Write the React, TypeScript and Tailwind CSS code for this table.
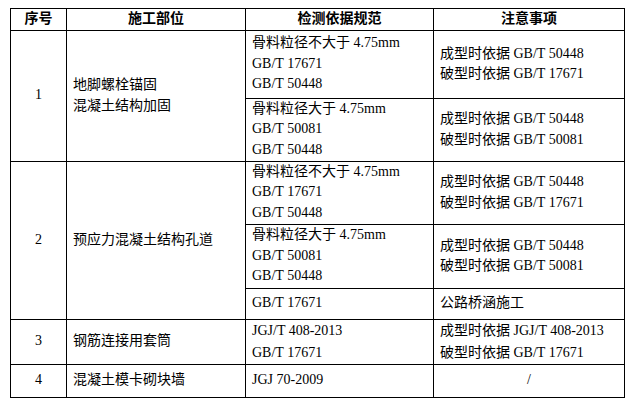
const font = { fontFamily: '"Liberation Serif", "Noto Sans CJK SC", serif' };

const cell = 'border border-black align-middle px-[6px] py-0 text-[14px] leading-[20.5px] text-black';

function Lines({ items }: { items: string[] }) {
  return (
    <>
      {items.map((t, i) => (
        <div key={i} className="whitespace-nowrap">{t}</div>
      ))}
    </>
  );
}

export default function App() {
  return (
    <div className="bg-white w-[633px] h-[403px] pt-[8px] pl-[10px]" style={font}>
      <table className="border-collapse table-fixed w-[614px]">
        <colgroup>
          <col className="w-[56px]" />
          <col className="w-[179px]" />
          <col className="w-[188px]" />
          <col className="w-[191px]" />
        </colgroup>
        <thead>
          <tr className="h-[21px]">
            <th className={`${cell} text-center font-bold`}>序号</th>
            <th className={`${cell} text-center font-bold`}>施工部位</th>
            <th className={`${cell} text-center font-bold`}>检测依据规范</th>
            <th className={`${cell} text-center font-bold`}>注意事项</th>
          </tr>
        </thead>
        <tbody>
          {/* 1 */}
          <tr className="h-[68px]">
            <td rowSpan={2} className={`${cell} text-center`}>1</td>
            <td rowSpan={2} className={cell}>
              <Lines items={['地脚螺栓锚固', '混凝土结构加固']} />
            </td>
            <td className={cell}>
              <Lines items={['骨料粒径不大于 4.75mm', 'GB/T 17671', 'GB/T 50448']} />
            </td>
            <td className={cell}>
              <Lines items={['成型时依据 GB/T 50448', '破型时依据 GB/T 17671']} />
            </td>
          </tr>
          <tr className="h-[63px]">
            <td className={cell}>
              <Lines items={['骨料粒径大于 4.75mm', 'GB/T 50081', 'GB/T 50448']} />
            </td>
            <td className={cell}>
              <Lines items={['成型时依据 GB/T 50448', '破型时依据 GB/T 50081']} />
            </td>
          </tr>

          {/* 2 */}
          <tr className="h-[63px]">
            <td rowSpan={3} className={`${cell} text-center`}>2</td>
            <td rowSpan={3} className={cell}>预应力混凝土结构孔道</td>
            <td className={cell}>
              <Lines items={['骨料粒径不大于 4.75mm', 'GB/T 17671', 'GB/T 50448']} />
            </td>
            <td className={cell}>
              <Lines items={['成型时依据 GB/T 50448', '破型时依据 GB/T 17671']} />
            </td>
          </tr>
          <tr className="h-[64px]">
            <td className={cell}>
              <Lines items={['骨料粒径大于 4.75mm', 'GB/T 50081', 'GB/T 50448']} />
            </td>
            <td className={cell}>
              <Lines items={['成型时依据 GB/T 50448', '破型时依据 GB/T 50081']} />
            </td>
          </tr>
          <tr className="h-[31px]">
            <td className={cell}>GB/T 17671</td>
            <td className={cell}>公路桥涵施工</td>
          </tr>

          {/* 3 */}
          <tr className="h-[42px]">
            <td className={`${cell} text-center`}>3</td>
            <td className={cell}>钢筋连接用套筒</td>
            <td className={`${cell} leading-[22px]`}>
              <Lines items={['JGJ/T 408-2013', 'GB/T 17671']} />
            </td>
            <td className={`${cell} leading-[22px]`}>
              <Lines items={['成型时依据 JGJ/T 408-2013', '破型时依据 GB/T 17671']} />
            </td>
          </tr>

          {/* 4 */}
          <tr className="h-[33px]">
            <td className={`${cell} text-center`}>4</td>
            <td className={cell}>混凝土模卡砌块墙</td>
            <td className={cell}>JGJ 70-2009</td>
            <td className={`${cell} text-center`}>/</td>
          </tr>
        </tbody>
      </table>
    </div>
  );
}
